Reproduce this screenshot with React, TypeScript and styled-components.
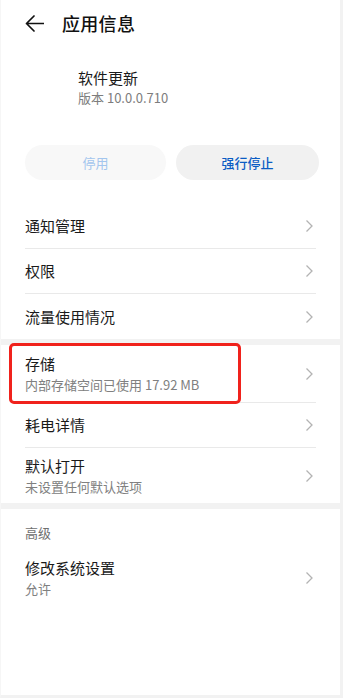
import React from "react";
import styled, { createGlobalStyle } from "styled-components";

const GlobalStyle = createGlobalStyle`
    * {
        box-sizing: border-box;
    }
    body {
        margin: 0;
        background: #ffffff;
        font-family: "Noto Sans CJK SC", "Noto Sans", sans-serif;
        color: #1a1a1a;
    }
`;

const Screen = styled.div`
    width: 343px;
    height: 698px;
    background: #ffffff;
    border-right: 3px solid #f2f2f2;
    border-bottom: 3px solid #f2f2f2;
    border-left: 1px solid #f6f6f6;
    overflow: hidden;
`;

const Header = styled.div`
    height: 46px;
    display: flex;
    align-items: center;
    padding-left: 24px;
`;

const BackButton = styled.div`
    width: 20px;
    height: 18px;
    display: flex;
    align-items: center;
`;

const Title = styled.div`
    margin-left: 17px;
    font-size: 18px;
    font-weight: 500;
    color: #111;
    letter-spacing: 0.3px;
`;

const AppInfo = styled.div`
    margin-top: 22px;
    padding-left: 77px;
    display: flex;
    flex-direction: column;
`;

const AppName = styled.div`
    font-size: 15px;
    line-height: 20px;
    color: #1a1a1a;
`;

const AppVersion = styled.div`
    font-size: 13px;
    line-height: 20px;
    color: #7d7d7d;
`;

const ButtonRow = styled.div`
    margin-top: 37px;
    padding: 0 24px;
    display: grid;
    grid-template-columns: 141px 143px;
    gap: 10px;
`;

const PillButton = styled.div<{ $disabled?: boolean }>`
    height: 35px;
    border-radius: 18px;
    display: flex;
    align-items: center;
    justify-content: center;
    font-size: 13px;
    font-weight: ${(p) => (p.$disabled ? 400 : 500)};
    background: ${(p) => (p.$disabled ? "#f8f8f8" : "#f1f1f1")};
    color: ${(p) => (p.$disabled ? "#a3c6ee" : "#0b5cc4")};
`;

const Group = styled.div<{ $top?: number }>`
    margin-top: ${(p) => p.$top ?? 0}px;
    display: flex;
    flex-direction: column;
`;

const Band = styled.div`
    height: 6px;
    background: #f2f2f2;
`;

const Row = styled.div<{ $height: number; $last?: boolean }>`
    position: relative;
    height: ${(p) => p.$height}px;
    margin: 0 24px;
    display: flex;
    align-items: center;
    justify-content: space-between;
    border-bottom: ${(p) => (p.$last ? "none" : "1px solid #e9e9e9")};
`;

const RowText = styled.div`
    display: flex;
    flex-direction: column;
`;

const RowTitle = styled.div`
    font-size: 15px;
    line-height: 22px;
    color: #1a1a1a;
`;

const RowSub = styled.div`
    font-size: 13px;
    line-height: 20px;
    color: #808080;
`;

const SectionLabel = styled.div`
    height: 38px;
    padding: 8px 24px 0;
    display: flex;
    align-items: center;
    font-size: 13px;
    color: #6f6f6f;
`;

const Highlight = styled.div`
    position: absolute;
    left: -16px;
    top: -2px;
    width: 232px;
    height: 61px;
    border: 3px solid #f0221c;
    border-radius: 5px;
    pointer-events: none;
`;

const Chevron = () => (
    <svg width="9" height="14" viewBox="0 0 9 14" style={{ marginRight: 2 }}>
        <path d="M1.5 1.5 L7 7 L1.5 12.5" fill="none" stroke="#b3b3b3" strokeWidth="1.3" />
    </svg>
);

type Item = { title: string; sub?: string; height: number; highlight?: boolean };

const ListRow: React.FC<{ item: Item; last?: boolean }> = ({ item, last }) => (
    <Row $height={item.height} $last={last}>
        {item.highlight && <Highlight />}
        <RowText>
            <RowTitle>{item.title}</RowTitle>
            {item.sub && <RowSub>{item.sub}</RowSub>}
        </RowText>
        <Chevron />
    </Row>
);

const groupOne: Item[] = [
    { title: "通知管理", height: 45 },
    { title: "权限", height: 45 },
    { title: "流量使用情况", height: 45 },
];

const groupTwo: Item[] = [
    { title: "存储", sub: "内部存储空间已使用 17.92 MB", height: 58, highlight: true },
    { title: "耗电详情", height: 45 },
    { title: "默认打开", sub: "未设置任何默认选项", height: 55 },
];

const App: React.FC = () => {
    return (
        <>
            <GlobalStyle />
            <Screen>
                <Header>
                    <BackButton>
                        <svg width="19" height="17" viewBox="0 0 19 17">
                            <path
                                d="M9 1 L1.5 8.5 L9 16 M1.5 8.5 H18.5"
                                fill="none"
                                stroke="#111"
                                strokeWidth="1.7"
                                strokeLinecap="round"
                                strokeLinejoin="round"
                            />
                        </svg>
                    </BackButton>
                    <Title>应用信息</Title>
                </Header>

                <AppInfo>
                    <AppName>软件更新</AppName>
                    <AppVersion>版本 10.0.0.710</AppVersion>
                </AppInfo>

                <ButtonRow>
                    <PillButton $disabled>停用</PillButton>
                    <PillButton>强行停止</PillButton>
                </ButtonRow>

                <Group $top={24}>
                    {groupOne.map((item, i) => (
                        <ListRow key={item.title} item={item} last={i === groupOne.length - 1} />
                    ))}
                </Group>
                <Band />
                <Group>
                    {groupTwo.map((item, i) => (
                        <ListRow key={item.title} item={item} last={i === groupTwo.length - 1} />
                    ))}
                </Group>
                <Band />
                <Group>
                    <SectionLabel>高级</SectionLabel>
                    <ListRow item={{ title: "修改系统设置", sub: "允许", height: 62 }} last />
                </Group>
            </Screen>
        </>
    );
};

export default App;
